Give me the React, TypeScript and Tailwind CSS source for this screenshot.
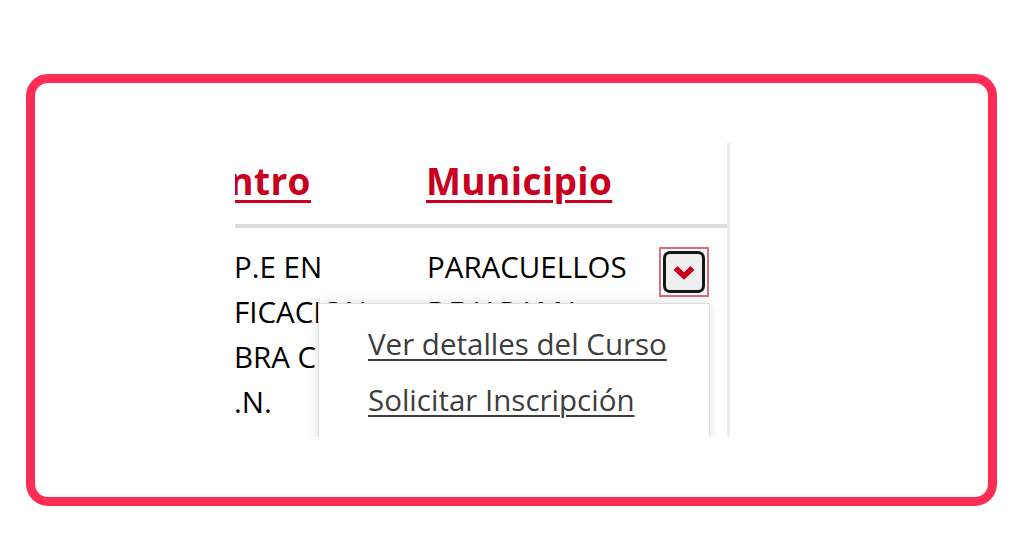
export default function App() {
  return (
    <div className="h-[536px] w-[1024px] bg-white pl-[26px] pt-[74px] font-['Open_Sans',sans-serif]">
      <div className="h-[432px] w-[971px] rounded-[22px] border-[9px] border-[#ff2d55] pl-[200px] pt-[60px]">
        {/* cropped table */}
        <div className="relative h-[294px] w-[495px] overflow-hidden border-r-[3px] border-[#ececec] bg-white">
          <div className="grid h-[85px] grid-cols-[192px_232px_50px] border-b-4 border-[#dcdcdc] pt-[15px] text-[37px] font-bold leading-[46px] tracking-[0.4px] text-[#c8001e]">
            <div className="-ml-[52px] whitespace-nowrap">
              <span className="underline decoration-[3px] underline-offset-[5px]">Centro</span>
            </div>
            <div className="-ml-[1px]">
              <span className="underline decoration-[3px] underline-offset-[5px]">Municipio</span>
            </div>
            <div />
          </div>

          <div className="grid grid-cols-[192px_232px_50px] pt-[16px] text-[29.5px] leading-[45px] text-black">
            <div className="-ml-[1px] whitespace-nowrap">
              <div>P.E EN</div>
              <div>FICACION</div>
              <div>BRA CIVIL</div>
              <div>.N.</div>
            </div>
            <div className="whitespace-nowrap">
              <div>PARACUELLOS</div>
              <div>DE JARAMA</div>
            </div>
            <div className="pt-[3px]">
              <button className="flex h-[50px] w-[50px] items-center justify-center border-2 border-[#e36a78] p-[2px]">
                <span className="flex h-full w-full items-center justify-center rounded-[7px] border-[3px] border-[#161616] bg-[#efefef]">
                  <svg width="24" height="16" viewBox="0 0 24 16">
                    <polyline points="3.5,4 12,12 20.5,4" fill="none" stroke="#c8001e" strokeWidth="5.5" strokeLinejoin="miter" />
                  </svg>
                </span>
              </button>
            </div>
          </div>

          {/* dropdown menu */}
          <div className="absolute left-[83px] top-[160px] h-[200px] w-[392px] border border-[#dedede] bg-white pl-[49px] pt-[17px] shadow-[0_0_10px_rgba(0,0,0,0.12)]">
            <div className="flex flex-col gap-[11px] text-[29.5px] leading-[45px] text-[#3d3d3d]">
              <a className="w-fit underline decoration-2 underline-offset-[4px]">Ver detalles del Curso</a>
              <a className="w-fit underline decoration-2 underline-offset-[4px]">Solicitar Inscripción</a>
            </div>
          </div>
        </div>
      </div>
    </div>
  );
}
